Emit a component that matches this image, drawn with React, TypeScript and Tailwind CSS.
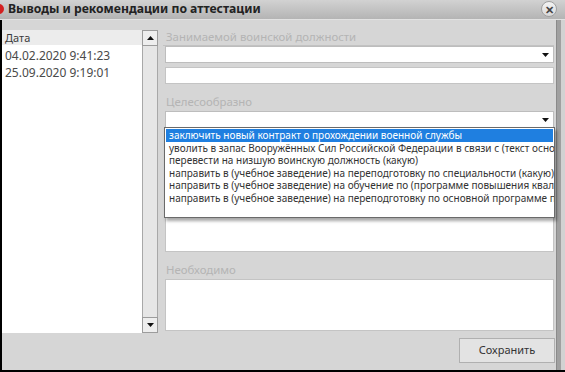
import React from "react";

const items = [
  "заключить новый контракт о прохождении военной службы",
  "уволить в запас Вооружённых Сил Российской Федерации в связи с (текст основания)",
  "перевести на низшую воинскую должность (какую)",
  "направить в (учебное заведение) на переподготовку по специальности (какую)",
  "направить в (учебное заведение) на обучение по (программе повышения квалификации)",
  "направить в (учебное заведение) на переподготовку по основной программе профессионального обучения",
];

function Arrow({ up = false }: { up?: boolean }) {
  return (
    <svg width="7" height="4" viewBox="0 0 7 4">
      {up ? <path d="M0 4 L3.5 0 L7 4 Z" fill="#111" /> : <path d="M0 0 L7 0 L3.5 4 Z" fill="#111" />}
    </svg>
  );
}

function Combo() {
  return (
    <div className="h-[17px] bg-white border border-[#bdbdbd] flex items-center justify-end pr-[4px]">
      <Arrow />
    </div>
  );
}

export default function App() {
  return (
    <div
      className="w-[565px] h-[372px] relative overflow-hidden bg-[#d6d6d6] flex flex-col"
      style={{ fontFamily: '"Noto Sans", "Open Sans", sans-serif' }}
    >
      {/* Title bar */}
      <div className="h-[20px] shrink-0 bg-gradient-to-b from-[#d2d2d2] to-[#b4b4b4] border-b border-[#e2e2e2] flex items-center relative">
        <div className="absolute left-[-6px] top-[4px] w-[10px] h-[10px] rounded-full bg-[#d42020]" />
        <span className="ml-[8px] text-[12.2px] font-bold text-[#222] leading-none">Выводы и рекомендации по аттестации</span>
        <div className="absolute right-[8px] top-[1px] w-[16px] h-[16px] rounded-full bg-gradient-to-b from-[#f4f4f4] to-[#d8d8d8] border border-[#a0a0a0] flex items-center justify-center">
          <span className="text-[11px] font-bold text-[#444] leading-none">✕</span>
        </div>
      </div>

      {/* Body */}
      <div className="flex-1 flex border-l-2 border-b-2 border-black">
        <div className="flex-1 flex flex-col">
          <div className="flex h-[313px]">
            {/* Left list */}
            <div className="w-[140px] mt-[10px] h-[303px] bg-white flex flex-col">
              <div className="h-[15px] bg-[#ececec] pl-[3px] text-[11px] leading-[15px] text-[#3a3a3a]">Дата</div>
              <div className="pl-[3px] pt-[2px] text-[12px] leading-[17px] text-[#4a4a4a]">
                <div>04.02.2020 9:41:23</div>
                <div>25.09.2020 9:19:01</div>
              </div>
            </div>
            {/* Scrollbar */}
            <div className="w-[16px] mt-[10px] h-[303px] bg-[#c4c4c4] flex flex-col">
              <div className="h-[16px] bg-[#eeeeee] border border-[#9c9c9c] flex items-center justify-center">
                <Arrow up />
              </div>
              <div className="flex-1 bg-[#e6e6e6] border-x border-[#a8a8a8]" />
              <div className="h-[16px] bg-[#eeeeee] border border-[#9c9c9c] flex items-center justify-center">
                <Arrow />
              </div>
            </div>
            {/* Right panel */}
            <div className="w-[389px] ml-[7px] relative flex flex-col">
              <div className="mt-[8px] h-[17px] text-[11.4px] leading-[17px] text-[#b4b4b4] pl-[1px]">Занимаемой воинской должности</div>
              <div className="h-[1px] bg-[#c2c2c2] -ml-[2px]" />
              <Combo />
              <div className="mt-[4px] h-[17px] bg-white border border-[#c4c4c4]" />
              <div className="mt-[9px] h-[17px] text-[11.4px] leading-[17px] text-[#b4b4b4] pl-[1px]">Целесообразно</div>
              <div className="mt-[1px]">
                <Combo />
              </div>
              <div className="mt-[3px] h-[121px] bg-white border border-[#c4c4c4]" />
              <div className="mt-[9px] h-[17px] text-[11.4px] leading-[17px] text-[#b4b4b4] pl-[1px]">Необходимо</div>
              <div className="mt-[1px] h-[52px] bg-white border border-[#c4c4c4]" />

              {/* Dropdown list overlay */}
              <div className="absolute left-[-1px] top-[107px] w-[391px] h-[91px] bg-white border border-[#6a6a6a] shadow-[2px_3px_3px_rgba(0,0,0,0.35)] overflow-hidden pt-[1px] px-[1px]">
                {items.map((t, i) => (
                  <div
                    key={i}
                    className={
                      "h-[12.5px] leading-[12.5px] pl-[3px] text-[10px] whitespace-nowrap " +
                      (i === 0 ? "bg-[#1f7fe0] text-white" : "text-[#333]")
                    }
                  >
                    {t}
                  </div>
                ))}
              </div>
            </div>
            <div className="flex-1" />
          </div>
          {/* Bottom bar */}
          <div className="flex-1 flex justify-end items-start pr-[1px] pt-[5px]">
            <div className="w-[96px] h-[25px] bg-[#e3e3e3] border border-[#b0b0b0] flex items-center justify-center text-[11px] text-[#333]">
              Сохранить
            </div>
          </div>
        </div>
        {/* Right edge */}
        <div className="w-[9px] flex">
          <div className="w-[1px] bg-[#8a8a8a]" />
          <div className="w-[4px] bg-[#a0a0a0]" />
          <div className="w-[4px] bg-[#d2d2d2]" />
        </div>
      </div>
    </div>
  );
}
